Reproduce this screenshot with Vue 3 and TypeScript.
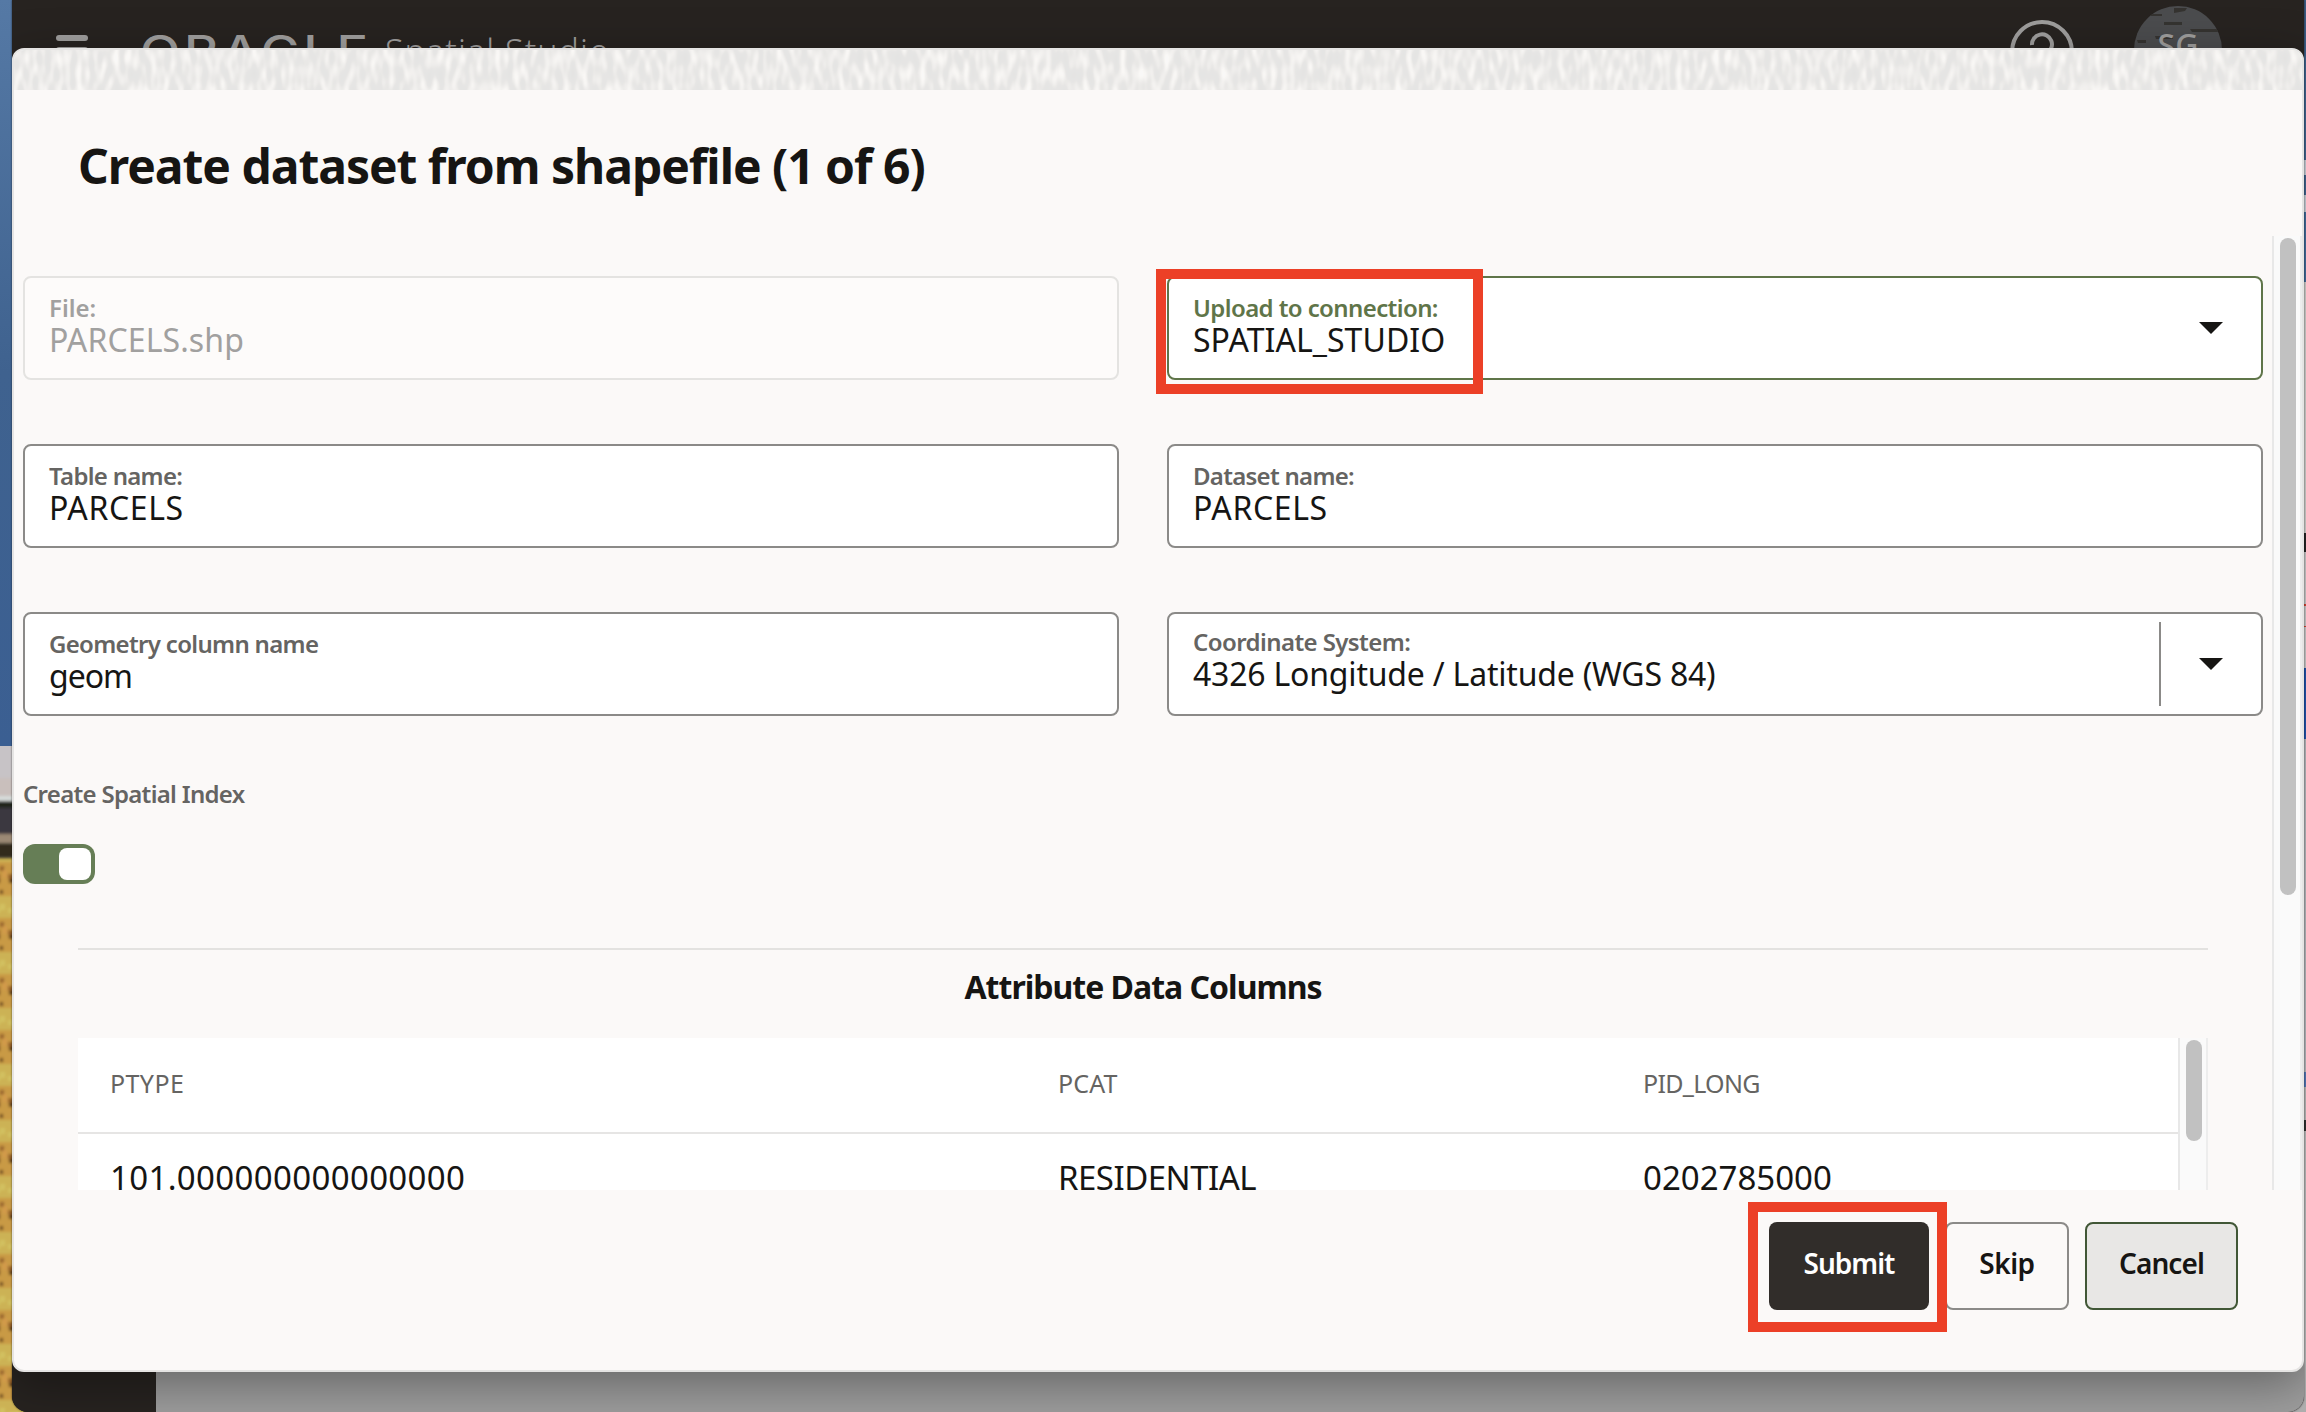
<script setup lang="ts">
interface Line {
  text: string
  spacing: number
}

interface Field {
  label: Line
  value: Line
  kind?: 'disabled' | 'active'
  arrow?: boolean
  divided?: boolean
}

const title: Line = { text: 'Create dataset from shapefile (1 of 6)', spacing: -1.04 }

const fields: Field[] = [
  {
    label: { text: 'File:', spacing: 0 },
    value: { text: 'PARCELS.shp', spacing: 0.1 },
    kind: 'disabled',
  },
  {
    label: { text: 'Upload to connection:', spacing: -0.6 },
    value: { text: 'SPATIAL_STUDIO', spacing: 0.05 },
    kind: 'active',
    arrow: true,
  },
  {
    label: { text: 'Table name:', spacing: -0.7 },
    value: { text: 'PARCELS', spacing: 0.6 },
  },
  {
    label: { text: 'Dataset name:', spacing: -0.72 },
    value: { text: 'PARCELS', spacing: 0.6 },
  },
  {
    label: { text: 'Geometry column name', spacing: -0.68 },
    value: { text: 'geom', spacing: -1.03 },
  },
  {
    label: { text: 'Coordinate System:', spacing: -0.58 },
    value: { text: '4326 Longitude / Latitude (WGS 84)', spacing: -0.2 },
    arrow: true,
    divided: true,
  },
]

const columns: Line[] = [
  { text: 'PTYPE', spacing: 0.4 },
  { text: 'PCAT', spacing: 0.1 },
  { text: 'PID_LONG', spacing: -0.7 },
]

const row: Line[] = [
  { text: '101.000000000000000', spacing: 0.35 },
  { text: 'RESIDENTIAL', spacing: -0.5 },
  { text: '0202785000', spacing: 0 },
]

const track = (line: Line) => ({ letterSpacing: `${line.spacing}px` })
</script>

<template>
  <div class="desktop">
    <svg class="photo" width="32" height="1412" viewBox="0 0 32 1412" preserveAspectRatio="none" aria-hidden="true">
      <defs>
        <linearGradient id="sky" x1="0" y1="0" x2="0" y2="1">
          <stop offset="0" stop-color="#5579a5" />
          <stop offset="0.5" stop-color="#3f628f" />
          <stop offset="1" stop-color="#3b5f92" />
        </linearGradient>
        <pattern id="grain" width="32" height="56" patternUnits="userSpaceOnUse">
          <rect width="32" height="56" fill="#c99a45" />
          <rect width="32" height="22" fill="#ccb254" />
          <path d="M0 8h5v6H0zM8 12h24v5H8z" fill="#d2c160" />
          <path d="M0 26h4v5H0zM8 34h24v5H8z" fill="#94602c" />
          <path d="M9 39h23v4H9zM0 50h3v4H0z" fill="#573719" />
          <path d="M3 30h4v8H3z" fill="#d39a4c" />
        </pattern>
        <filter id="soft"><feGaussianBlur stdDeviation="1.5" /></filter>
      </defs>
      <rect width="32" height="748" fill="url(#sky)" />
      <rect x="-8" y="856" width="48" height="570" fill="url(#grain)" filter="url(#soft)" />
      <g filter="url(#soft)">
        <rect x="-8" y="736" width="48" height="42" fill="#c7c3c6" />
        <rect x="-8" y="778" width="48" height="26" fill="#c9bfbc" />
        <rect x="-8" y="796" width="48" height="5" fill="#d7dcda" />
        <rect x="-8" y="801" width="48" height="7" fill="#20281f" />
        <rect x="-8" y="808" width="48" height="26" fill="#3b3940" />
        <rect x="-8" y="834" width="48" height="9" fill="#9b8974" />
        <rect x="-8" y="843" width="48" height="15" fill="#33291f" />
      </g>
      <rect width="32" height="746" fill="url(#sky)" />
    </svg>

    <div class="window">
      <header class="topbar">
        <svg class="menu" width="32" height="30" viewBox="0 0 32 30" aria-hidden="true">
          <rect width="32" height="6" rx="3" />
          <rect y="12" width="32" height="6" rx="3" />
          <rect y="24" width="32" height="6" rx="3" />
        </svg>
        <svg class="brand" width="232" height="40" viewBox="0 0 232 40" aria-hidden="true">
          <text x="-2" y="32" textLength="232" lengthAdjust="spacingAndGlyphs">ORACLE</text>
        </svg>
        <span class="product">Spatial Studio</span>
        <svg class="help" width="64" height="64" viewBox="0 0 64 64" aria-hidden="true">
          <circle cx="32" cy="32" r="30" />
          <path d="M22 25a10 10 0 1 1 15 8c-3 2-5 4-5 8M32 46v3" />
        </svg>
        <div class="avatar">
          <svg width="88" height="88" viewBox="0 0 88 88" aria-hidden="true">
            <path d="M40 2l13 0-2 3-11 2zM16 8h12v2H16zM30 16h18v3H30zM56 23h30v3H58zM21 30h18v3H22zM3 34h9v3H4z" />
          </svg>
          <span>SG</span>
        </div>
      </header>
      <div class="backdrop">
        <div class="rail"></div>
        <div class="page"></div>
      </div>

      <section class="dialog">
        <svg class="texture" width="2288" height="40" aria-hidden="true">
          <filter id="weave" x="0" y="0" width="100%" height="100%" color-interpolation-filters="sRGB">
            <feTurbulence type="fractalNoise" baseFrequency="0.16 0.06" numOctaves="1" seed="7" />
            <feColorMatrix values="0.3 0 0 0 0.778  0.3 0 0 0 0.775  0.3 0 0 0 0.77  0 0 0 0 1" />
            <feComponentTransfer>
              <feFuncR type="table" tableValues="0.89 0.89 0.89 0.89 0.89 0.89 0.89 0.89 0.89 0.905 0.98" />
              <feFuncG type="table" tableValues="0.89 0.89 0.89 0.89 0.89 0.89 0.89 0.89 0.89 0.903 0.975" />
              <feFuncB type="table" tableValues="0.885 0.885 0.885 0.885 0.885 0.885 0.885 0.885 0.885 0.9 0.97" />
            </feComponentTransfer>
          </filter>
          <rect width="2288" height="40" filter="url(#weave)" />
        </svg>
        <div class="dialog-head">
          <h1 :style="track(title)">{{ title.text }}</h1>
        </div>

        <div class="viewport">
          <div class="body">
            <div class="form">
              <div v-for="(field, i) in fields" :key="i" class="field" :class="[field.kind, { divided: field.divided }]">
                <div class="copy">
                  <label :style="track(field.label)">{{ field.label.text }}</label>
                  <div class="value" :style="track(field.value)">{{ field.value.text }}</div>
                </div>
                <div v-if="field.arrow" class="picker">
                  <svg width="24" height="12" viewBox="0 0 24 12" aria-hidden="true"><path d="M0 0h24L12 12z" /></svg>
                </div>
                <div v-if="field.kind === 'active'" class="mark mark-field"></div>
              </div>
            </div>

            <div class="switch-label">Create Spatial Index</div>
            <div class="switch"><i></i></div>

            <div class="attributes">
              <h2>Attribute Data Columns</h2>
              <div class="table-wrap">
                <div class="table">
                  <div class="tr th">
                    <span v-for="c in columns" :key="c.text" :style="track(c)">{{ c.text }}</span>
                  </div>
                  <div class="tr td">
                    <span v-for="c in row" :key="c.text" :style="track(c)">{{ c.text }}</span>
                  </div>
                </div>
                <div class="scroll scroll-table"><i></i></div>
              </div>
            </div>
          </div>
          <div class="scroll"><i></i></div>
        </div>

        <footer class="actions">
          <button class="submit">Submit<b class="mark mark-submit"></b></button>
          <button class="skip">Skip</button>
          <button class="cancel">Cancel</button>
        </footer>
      </section>
    </div>
  </div>
</template>

<style>
body {
  margin: 0;
}
</style>

<style scoped>
.desktop,
.desktop * {
  box-sizing: border-box;
}

.desktop {
  position: relative;
  display: flex;
  width: 2306px;
  height: 1412px;
  padding: 0 2px 0 12px;
  overflow: hidden;
  font-family: "Noto Sans", "Open Sans", sans-serif;
  color: #161513;
  white-space: nowrap;
  background: linear-gradient(
    #3c5d84 0 160px, #b8bec6 160px 175px, #3c5d84 175px 195px, #b8bec6 195px 212px, #3d638f 212px 282px,
    #c0bfbc 282px 533px, #222 533px 552px, #b9b9b9 552px 604px, #c63f2f 604px 606px, #b9b9b9 606px 626px,
    #c63f2f 626px 627px, #b9b9b9 627px 668px, #1e4da0 668px 739px, #a7a9ad 739px 1072px, #4c6ea8 1072px 1087px,
    #a9a9a9 1087px 1120px, #2b2b2b 1120px 1131px, #adadad 1131px
  );
}

.photo {
  position: absolute;
  left: 0;
  top: 0;
}

.window {
  position: relative;
  display: flex;
  flex-direction: column;
  flex: 1;
  overflow: hidden;
  border-radius: 0 0 16px 16px;
  background: #272320;
  box-shadow: 0 0 2px rgba(0, 0, 0, 0.7);
}

.topbar {
  display: flex;
  align-items: flex-start;
  height: 96px;
  padding-left: 44px;
  background: #272320;
}

.menu {
  margin-top: 35px;
  fill: #9f9e9d;
}

.brand {
  margin: 34px 0 0 54px;
  overflow: visible;
}

.brand text {
  font: 500 42px "Inter", sans-serif;
  letter-spacing: 3px;
  fill: #9f9e9d;
}

.product {
  margin: 27px 0 0 11px;
  font-size: 34px;
  font-weight: 300;
  line-height: 48px;
  letter-spacing: 1.05px;
  color: #9f9e9d;
}

.help {
  margin: 20px 0 0 auto;
  fill: none;
  stroke: #9f9e9d;
  stroke-width: 4;
}

.avatar {
  position: relative;
  width: 88px;
  height: 88px;
  margin: 6px 82px 0 60px;
  border-radius: 50%;
  overflow: hidden;
  background: #4b4c4e;
  text-align: center;
  font-size: 32px;
  line-height: 78px;
  font-weight: 500;
  color: #9f9e9d;
}

.avatar svg {
  position: absolute;
  left: 0;
  top: 0;
  fill: #353330;
}

.avatar span {
  position: relative;
}

.backdrop {
  display: flex;
  flex: 1;
}

.rail {
  width: 144px;
  background: #272320;
}

.page {
  flex: 1;
  background: #9d9d9d;
}

.dialog {
  position: absolute;
  inset: 48px 0 40px 0;
  display: flex;
  flex-direction: column;
  border: 2px solid #e5e4e3;
  border-radius: 12px;
  overflow: hidden;
  background: #fbf9f8;
  box-shadow: 0 12px 48px 0 rgba(0, 0, 0, 0.36);
}

.texture {
  display: block;
  flex: none;
}

.dialog-head {
  height: 146px;
  padding: 44px 0 0 64px;
}

h1 {
  margin: 0;
  font-size: 48px;
  line-height: 64px;
  font-weight: 700;
}

.viewport {
  display: flex;
  height: 954px;
  overflow: hidden;
}

.body {
  flex: 1;
  height: 954px;
  padding: 40px 0 0 9px;
  overflow: hidden;
}

.form {
  display: grid;
  grid-template-columns: 1096px 1096px;
  grid-auto-rows: 104px;
  gap: 64px 48px;
}

.field {
  position: relative;
  display: flex;
  justify-content: space-between;
  border: 2px solid #8b8a88;
  border-radius: 8px;
  background: #fff;
}

.copy {
  padding: 17px 0 0 24px;
}

label {
  display: block;
  font-size: 24px;
  line-height: 26px;
  font-weight: 600;
  color: #656462;
}

.value {
  margin-top: 1px;
  font-size: 32px;
  line-height: 36px;
}

.disabled {
  border-color: #e4e3e1;
  background: #fdfbfa;
}

.disabled label,
.disabled .value {
  color: #a1a09f;
}

.active {
  border-color: #5f7549;
}

.active label {
  color: #5f7549;
}

.divided .copy {
  padding-top: 15px;
}

.picker {
  width: 102px;
  height: 84px;
  margin-top: 8px;
  padding: 36px 0 0 38px;
  border-left: 2px solid transparent;
}

.picker svg {
  display: block;
  fill: #161513;
}

.divided .picker {
  border-left-color: #8b8a88;
}

.mark {
  position: absolute;
  border: 10px solid #ec4027;
}

.mark-field {
  left: -13px;
  top: -9px;
  width: 327px;
  height: 125px;
}

.mark-submit {
  left: -21px;
  top: -20px;
  width: 199px;
  height: 130px;
  z-index: 1;
}

.switch-label {
  margin-top: 63px;
  font-size: 24px;
  line-height: 30px;
  font-weight: 600;
  letter-spacing: -0.7px;
  color: #656462;
}

.switch {
  display: flex;
  justify-content: flex-end;
  width: 72px;
  height: 40px;
  margin-top: 35px;
  padding: 4px;
  border-radius: 12px;
  background: #667e56;
}

.switch i {
  width: 32px;
  height: 32px;
  border-radius: 8px;
  background: #fff;
}

.attributes {
  width: 2130px;
  margin: 64px 0 0 55px;
  border-top: 2px solid #e3e2e0;
}

h2 {
  margin: 17px 0 31px;
  font-size: 32px;
  line-height: 40px;
  font-weight: 700;
  letter-spacing: -1px;
  text-align: center;
}

.table-wrap {
  display: flex;
  height: 200px;
}

.table {
  flex: 1;
  background: #fff;
}

.tr {
  display: grid;
  grid-template-columns: 948px 585px 1fr;
  padding-left: 32px;
}

.th {
  height: 96px;
  padding-top: 30px;
  border-bottom: 2px solid #e6e5e4;
  font-size: 25px;
  line-height: 30px;
  color: #656462;
}

.td {
  padding-top: 24px;
  font-size: 33px;
  line-height: 40px;
}

.scroll {
  width: 30px;
  padding: 2px 4px 0 6px;
  border-left: 2px solid #e8e8e8;
  border-right: 2px solid #ededed;
  background: #fafafa;
}

.scroll i {
  display: block;
  width: 16px;
  height: 657px;
  border-radius: 8px;
  background: #c1c1c1;
}

.scroll-table i {
  height: 101px;
}

.actions {
  display: flex;
  justify-content: flex-end;
  gap: 16px;
  padding: 32px 64px 0 0;
}

button {
  position: relative;
  height: 88px;
  padding: 0 0 6px;
  border: 2px solid #8b8a88;
  border-radius: 8px;
  background: transparent;
  font: 600 28px/78px "Noto Sans", sans-serif;
  color: #161513;
}

.submit {
  width: 160px;
  border: 0;
  background: #312d2a;
  letter-spacing: -1px;
  color: #fff;
}

.skip {
  width: 124px;
  letter-spacing: -0.5px;
}

.cancel {
  width: 153px;
  border-color: #415736;
  background: #e8e7e5;
  letter-spacing: -0.9px;
}
</style>
